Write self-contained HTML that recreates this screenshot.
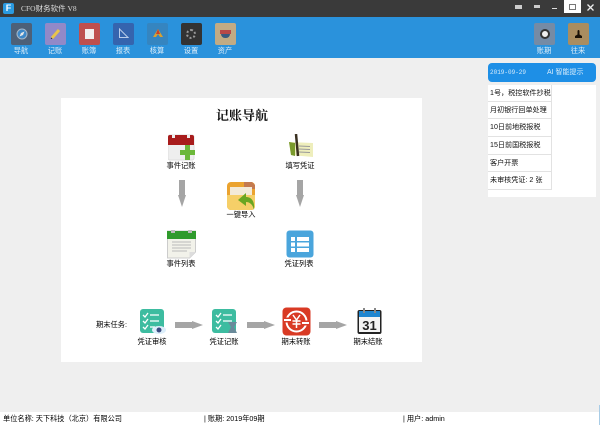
<!DOCTYPE html>
<html><head><meta charset="utf-8"><style>
html,body{margin:0;padding:0}
body{width:600px;height:425px;position:relative;overflow:hidden;background:#efefef;font-family:"Liberation Sans","Noto Sans CJK SC",sans-serif;font-size:7px;color:#222;filter:blur(.3px)}
div,svg{position:absolute}
.t{white-space:nowrap;line-height:12px}
.c{transform:translateX(-50%);text-align:center}
.tb{width:21px;height:22px;top:23px;border-radius:2px}
.tl{top:45px;color:#dcedf9;font-size:7.250px}
.nl{font-size:7.250px;color:#000}
.row{left:488px;width:64px;height:17px;background:#fff;border-bottom:1px solid #e2e2e2;border-right:1px solid #e2e2e2;font-size:7.100px;line-height:17px;white-space:nowrap;padding-left:2px;box-sizing:border-box;color:#111}
</style></head><body>
<div style="left:0;top:0;width:600px;height:17px;background:#3a3a3a"></div>
<div style="left:3px;top:3px;width:11px;height:11px;background:#2a9ae0;border-radius:2px"></div>
<div class="t" style="left:3px;top:3px;width:11px;text-align:center;color:#fff;font-size:9px;line-height:11px;font-weight:bold">F</div>
<div class="t" style="left:21px;top:3px;color:#ddd;font-size:7.500px;font-family:'Liberation Serif','Noto Sans CJK SC',serif">CFO财务软件 V8</div>
<div style="left:515px;top:5px;width:7px;height:4px;background:#ccc"></div>
<div style="left:534px;top:5px;width:6px;height:3px;background:#ccc"></div>
<div style="left:552px;top:8px;width:5px;height:1px;background:#ddd"></div>
<div style="left:564px;top:0;width:17px;height:13px;background:#fff"></div>
<div style="left:569px;top:4px;width:7px;height:6px;border:1px solid #777;box-sizing:border-box"></div>
<svg style="left:587px;top:4px" width="7" height="7"><path d="M.5.5l6 6M6.500.5l-6 6" stroke="#eee" stroke-width="1.300"/></svg>

<div style="left:0;top:17px;width:600px;height:41px;background:#2a92dc"></div>
<div class="tb" style="left:11px;background:#4d6078"></div>
<svg style="left:16px;top:28px" width="12" height="12"><circle cx="6" cy="6" r="5" fill="#3d88c8" stroke="#a8b8c8"/><path d="M8.500 3.500L5 5l-1.500 3.500L7 7z" fill="#e8e8e8"/></svg>
<div class="tb" style="left:45px;background:#9189c8"></div>
<svg style="left:50px;top:28px" width="11" height="11"><path d="M2 10L9 2" stroke="#e8c44a" stroke-width="3"/><path d="M2 10l-1 1" stroke="#333"/></svg>
<div class="tb" style="left:79px;background:#bf4f4e"></div>
<div style="left:85px;top:29px;width:9px;height:10px;background:#f2eeee"></div>
<div class="tb" style="left:113px;background:#3564ae"></div>
<svg style="left:118px;top:28px" width="11" height="11"><path d="M1.500 1v8.500H10z" fill="none" stroke="#b9cdea"/></svg>
<div class="tb" style="left:147px;background:#3585c0"></div>
<svg style="left:152px;top:28px" width="12" height="11"><path d="M6 1L1 9h3l2-3 2 3h3z" fill="#d9a030"/><path d="M6 1l-2 5h4z" fill="#c8402a"/></svg>
<div class="tb" style="left:181px;background:#333"></div>
<div style="left:186px;top:29px;width:10px;height:10px;border-radius:5px;border:2px dotted #999;box-sizing:border-box"></div>
<div class="tb" style="left:215px;background:#c2ab84"></div>
<div style="left:220px;top:30px;width:11px;height:4px;background:#b84848"></div>
<div style="left:221px;top:34px;width:9px;height:4px;background:#3a5a80;border-radius:0 0 4px 4px"></div>
<div class="tb" style="left:534px;background:#758ba5"></div>
<div style="left:540px;top:29px;width:10px;height:10px;border-radius:5px;background:#eee;border:2px solid #333;box-sizing:border-box"></div>
<div class="tb" style="left:568px;background:#a98d60"></div>
<svg style="left:573px;top:28px" width="11" height="11"><path d="M2 10h7V8L6.500 6.500V3.500a1 1.500 0 0 0-2 0V6.500L2 8z" fill="#1a1208"/></svg>
<div class="t c tl" style="left:21px">导航</div><div class="t c tl" style="left:55px">记账</div><div class="t c tl" style="left:89px">账簿</div><div class="t c tl" style="left:123px">报表</div><div class="t c tl" style="left:157px">核算</div><div class="t c tl" style="left:191px">设置</div><div class="t c tl" style="left:225px">资产</div><div class="t c tl" style="left:544px">账期</div><div class="t c tl" style="left:578px">往来</div>

<div style="left:61px;top:98px;width:361px;height:264px;background:#fff"></div>
<div class="t c" style="left:242px;top:108px;font-size:13px;line-height:15px;font-weight:bold;color:#111;font-family:'Liberation Serif','Noto Serif CJK SC',serif">记账导航</div>

<!-- 事件记账 -->
<svg style="left:168px;top:134px" width="28" height="28"><rect x="0" y="1" width="26" height="25" rx="2" fill="#eee" stroke="#ddd"/><path d="M0 11V3a2 2 0 0 1 2-2h22a2 2 0 0 1 2 2v8z" fill="#a81c1c"/><rect x="4" y="0" width="3" height="4" fill="#eee"/><rect x="19" y="0" width="3" height="4" fill="#eee"/><path d="M17 11h5v5h5v5h-5v5h-5v-5h-5v-5h5z" fill="#6cb83a"/></svg>
<div class="t c nl" style="left:181px;top:160px">事件记账</div>
<!-- 填写凭证 -->
<svg style="left:288px;top:134px" width="26" height="28"><path d="M1 8l24 1v14L3 21z" fill="#eeeebc"/><path d="M1 8l6 1v13l-4-1z" fill="#7a9a2c"/><path d="M11 12l11 .5M11 15l11 .5M11 18l11 .5" stroke="#999"/><path d="M8 0l2 22" stroke="#3a3020" stroke-width="2.500"/></svg>
<div class="t c nl" style="left:300px;top:160px">填写凭证</div>
<!-- 一键导入 -->
<svg style="left:226px;top:181px" width="30" height="29"><rect x="1" y="1" width="28" height="28" rx="4" fill="#eba32f"/><path d="M18 1h8l3 3v4H18z" fill="#c47a50"/><rect x="4" y="6" width="22" height="8" fill="#f3ead8"/><path d="M1 14h28v11a4 4 0 0 1-4 4H5a4 4 0 0 1-4-4z" fill="#f6cf68"/><path d="M12 19l8-7v4c6 0 9 5 8 13-1-5-4-8-8-8v4z" fill="#6aa622"/></svg>
<div class="t c nl" style="left:241px;top:209px">一键导入</div>
<!-- 事件列表 -->
<svg style="left:167px;top:230px" width="29" height="29"><path d="M.5 1h28v21l-6 6H.5z" fill="#f2f2ea" stroke="#ccc"/><path d="M0 1h29v8H0z" fill="#2f9a2c"/><rect x="4" y="0" width="4" height="3" fill="#bbb"/><rect x="21" y="0" width="4" height="3" fill="#bbb"/><path d="M5 12h19M5 15h19M5 18h19M5 21h15" stroke="#bbb"/><path d="M22.500 28v-6h6z" fill="#ddd"/></svg>
<div class="t c nl" style="left:181px;top:258px">事件列表</div>
<!-- 凭证列表 -->
<svg style="left:286px;top:230px" width="28" height="28"><rect x=".5" y=".5" width="27" height="27" rx="3" fill="#4aa5dc"/><path d="M5 7h4v4H5zM11 7h12v4H11zM5 12.500h4v4H5zM11 12.500h12v4H11zM5 18h4v4H5zM11 18h12v4H11z" fill="#fff"/></svg>
<div class="t c nl" style="left:299px;top:258px">凭证列表</div>

<!-- down arrows -->
<svg style="left:178px;top:180px" width="8" height="27"><path d="M1 0h6v15l1 0-4 12-4-12 1 0z" fill="#a5a5a5"/></svg>
<svg style="left:296px;top:180px" width="8" height="27"><path d="M1 0h6v15l1 0-4 12-4-12 1 0z" fill="#a5a5a5"/></svg>

<div class="t nl" style="left:96px;top:319px">期末任务:</div>
<svg style="left:139px;top:308px" width="28" height="27"><rect x="1" y="1" width="24" height="24" rx="3" fill="#3dbca0"/><path d="M4 7l2 2 3-4M4 13l2 2 3-4M4 19l2 2 3-4M11 7h9M11 13h9M11 19h5" stroke="#fff" fill="none" stroke-width="1.300"/><ellipse cx="20" cy="22" rx="7" ry="4" fill="#dceefa"/><circle cx="20" cy="22" r="2.500" fill="#3a4a80"/></svg>
<div class="t c nl" style="left:152px;top:336px">凭证审核</div>
<svg style="left:212px;top:308px" width="26" height="27"><rect y="1" width="24" height="24" rx="3" fill="#3dbca0"/><path d="M4 7l2 2 3-4M4 13l2 2 3-4M4 19l2 2 3-4M11 7h9M11 13h9" stroke="#fff" fill="none" stroke-width="1.300"/><path d="M16 14h9l-3 5 3 6h-9l3-6z" fill="#6a8a9a"/></svg>
<div class="t c nl" style="left:224px;top:336px">凭证记账</div>
<svg style="left:282px;top:307px" width="29" height="29"><rect x=".5" y=".5" width="28" height="28" rx="4" fill="#d93a24"/><circle cx="14.500" cy="14.500" r="10" fill="none" stroke="#fff" stroke-width="2"/><path d="M2 13h7M20 16h7" stroke="#d93a24" stroke-width="5"/><path d="M2 13h7M20 16h7" stroke="#fff" stroke-width="2"/><path d="M11 8l3.500 5 3.500-5M10.500 14h8M10.500 17h8M14.500 13v8" stroke="#fff" stroke-width="1.500" fill="none"/></svg>
<div class="t c nl" style="left:296px;top:336px">期末转账</div>
<svg style="left:357px;top:308px" width="25" height="27"><rect x=".5" y="2" width="24" height="24" rx="2" fill="#222"/><rect x="2" y="3" width="21" height="6" fill="#1f86d0"/><rect x="2" y="9" width="21" height="15" fill="#f4f4f4"/><rect x="6" y="0" width="2" height="5" fill="#888"/><rect x="17" y="0" width="2" height="5" fill="#888"/><text x="12.500" y="22" text-anchor="middle" font-family="Liberation Sans" font-weight="bold" font-size="13" fill="#222">31</text></svg>
<div class="t c nl" style="left:368px;top:336px">期末结账</div>

<svg style="left:175px;top:321px" width="28" height="8"><path d="M0 1h17V0l11 4-11 4V7H0z" fill="#a5a5a5"/></svg>
<svg style="left:247px;top:321px" width="28" height="8"><path d="M0 1h17V0l11 4-11 4V7H0z" fill="#a5a5a5"/></svg>
<svg style="left:319px;top:321px" width="28" height="8"><path d="M0 1h17V0l11 4-11 4V7H0z" fill="#a5a5a5"/></svg>

<!-- Side panel -->
<div style="left:488px;top:63px;width:108px;height:19px;background:#1e8fe6;border-radius:4px"></div>
<div class="t" style="left:490px;top:67px;color:#d8ecfb;font-size:6px;font-family:'Liberation Mono',monospace">2019-09-29</div>
<div class="t" style="left:547px;top:67px;color:#d8ecfb;font-size:7px">AI 智能提示</div>
<div style="left:488px;top:85px;width:108px;height:112px;background:#fff"></div>
<div class="row" style="top:85px">1号，税控软件抄税</div>
<div class="row" style="top:102px">月初银行回单处理</div>
<div class="row" style="top:119px;height:18px">10日前地税报税</div>
<div class="row" style="top:137px;height:18px">15日前国税报税</div>
<div class="row" style="top:155px">客户开票</div>
<div class="row" style="top:172px;height:18px">未审核凭证: 2 张</div>

<!-- Status -->
<div style="left:0;top:412px;width:600px;height:13px;background:#fff"></div>
<div class="t" style="left:3px;top:413px;font-size:7.200px;color:#000">单位名称: 天下科技（北京）有限公司</div>
<div class="t" style="left:204px;top:413px;font-size:7.200px;color:#000">| 账期: 2019年09期</div>
<div class="t" style="left:403px;top:413px;font-size:7.200px;color:#000">| 用户: admin</div>
<div style="left:599px;top:405px;width:1px;height:20px;background:#a8cce6"></div>
</body></html>
